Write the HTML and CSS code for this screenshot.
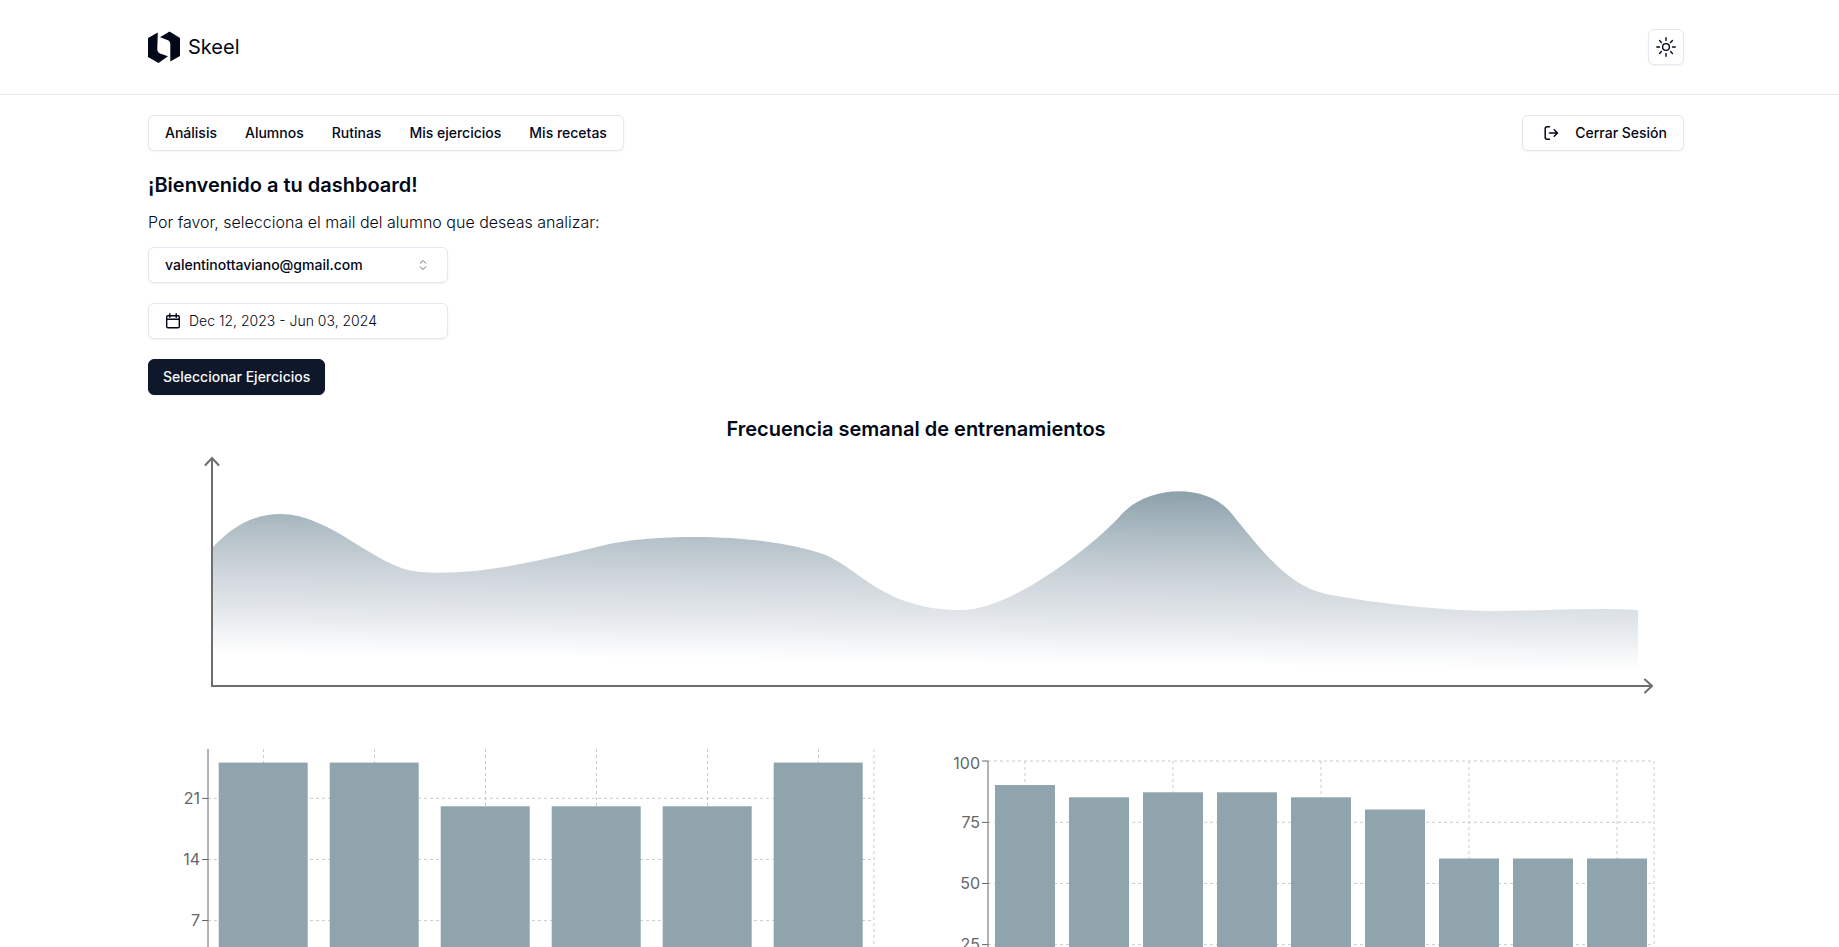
FILE: index.html
```html
<!DOCTYPE html>
<html lang="es">
<head>
<meta charset="utf-8">
<meta name="viewport" content="width=device-width, initial-scale=1">
<title>Skeel</title>
<link rel="stylesheet" href="styles.css">
</head>
<body>
<header class="site-header">
  <div class="container header-row">
    <a class="brand" href="#">
      <svg class="brand-logo" viewBox="0 0 32 32" aria-hidden="true">
        <path d="M0 7 9.8 1.500 9.300 17.500C9.300 20 9.700 21.400 12 22.500L20 25.300 10.500 32 0 26Z"/>
        <path d="M12 6.200 21.500 .4 32 7V25L22.300 30.400V14C22.300 11.500 22 9.800 19.400 8.900Z"/>
      </svg>
      <span>Skeel</span>
    </a>
    <button class="btn icon-btn" type="button" aria-label="Cambiar tema">
      <svg class="icon-sun" viewBox="0 0 20 20" aria-hidden="true">
        <circle cx="10" cy="10" r="3.400"/>
        <path d="M10 .8V3.500M10 16.500v2.700M.8 10H3.500M16.500 10h2.700M3.600 3.600 5.400 5.400M14.600 14.600l1.800 1.800M3.600 16.400l1.800-1.800M14.600 5.400l1.800-1.800"/>
      </svg>
    </button>
  </div>
</header>

<main class="page">
  <div class="container">
    <div class="toolbar">
      <nav class="menu">
        <a href="#">Análisis</a>
        <a href="#">Alumnos</a>
        <a href="#">Rutinas</a>
        <a href="#">Mis ejercicios</a>
        <a href="#">Mis recetas</a>
      </nav>
      <button class="btn logout" type="button">
        <svg class="icon-logout" viewBox="0 0 24 16" aria-hidden="true">
          <path d="M10.500 1.800H8.200Q6.200 1.800 6.200 3.800V12.200Q6.200 14.200 8.200 14.200H10.500M10.500 8H18.500M15.200 4.700 18.500 8 15.200 11.300"/>
        </svg>
        Cerrar Sesión
      </button>
    </div>

    <h1 class="title">¡Bienvenido a tu dashboard!</h1>

    <form class="filters">
      <label class="hint" for="student">Por favor, selecciona el mail del alumno que deseas analizar:</label>
      <div class="select-wrap">
        <select class="btn select" id="student">
          <option>valentinottaviano@gmail.com</option>
        </select>
        <svg class="icon-sort" viewBox="0 0 16 16" aria-hidden="true">
          <path d="M5.300 6.200 8 3.500l2.700 2.700M5.300 9.800 8 12.500l2.700-2.700"/>
        </svg>
      </div>
      <button class="btn date" type="button">
        <svg class="icon-calendar" viewBox="0 0 16 16" aria-hidden="true">
          <rect x="1.700" y="2.700" width="12.600" height="12" rx="1.300"/>
          <path d="M4.800 .8v3.500M11.200 .8v3.500M1.700 6.200h12.600"/>
        </svg>
        Dec 12, 2023 - Jun 03, 2024
      </button>
      <button class="btn primary" type="button">Seleccionar Ejercicios</button>
    </form>

    <h2 class="title chart-title">Frecuencia semanal de entrenamientos</h2>
    <svg class="area-chart" viewBox="0 0 1536 260" role="img" aria-label="Frecuencia semanal de entrenamientos">
      <defs>
        <linearGradient id="wave" gradientUnits="userSpaceOnUse" x1="780" y1="43" x2="778" y2="214">
          <stop offset="0" stop-color="#8fa2ac"/>
          <stop offset=".25" stop-color="#afbdc5"/>
          <stop offset=".5" stop-color="#cdd4da"/>
          <stop offset=".75" stop-color="#e4e8ec"/>
          <stop offset="1" stop-color="#ffffff"/>
        </linearGradient>
      </defs>
      <path class="wave" d="M65 99C86 77 108 66 132 66C184 66 228 121 272 124C330 128 390 113 453 98C480 91 515 89 546 89C600 89 645 96 675 106C710 119 735 162 813 162C865 162 948 95 972 68C1000 36 1060 35 1084 66C1115 104 1140 138 1178 146C1230 156 1300 163 1349 163C1390 163 1440 159 1490 162V237H65Z"/>
      <path class="axis" d="M64 10V238H1504M57.500 17 64 10l6.500 7M1497 231.500l7 6.500-7 6.500"/>
    </svg>

    <section class="bar-charts">
      <svg class="bar-chart" viewBox="0 0 768 260" role="img" aria-label="Gráfico de barras">
        <path class="grid" d="M60 49.300H726M60 110.500H726M60 171.600H726M115.500 0V232M226.500 0V232M337.500 0V232M448.500 0V232M559.500 0V232M670.500 0V232M726 0V232"/>
        <path class="ticks" d="M60 0V232M54 49.400H60M54 110.500H60M54 171.500H60"/>
        <g class="labels">
          <text x="52" y="55">21</text>
          <text x="52" y="116">14</text>
          <text x="52" y="177">7</text>
        </g>
        <g class="bars">
          <rect x="70.700" y="13.600" width="89" height="219"/>
          <rect x="181.700" y="13.600" width="89" height="219"/>
          <rect x="292.700" y="57.300" width="89" height="175"/>
          <rect x="403.700" y="57.300" width="89" height="175"/>
          <rect x="514.700" y="57.300" width="89" height="175"/>
          <rect x="625.700" y="13.600" width="89" height="219"/>
        </g>
      </svg>
      <svg class="bar-chart" viewBox="0 0 768 260" role="img" aria-label="Gráfico de barras">
        <path class="grid" d="M72 12H738M72 73.300H738M72 134.500H738M72 195.600H738M109 12V256M257 12V256M405 12V256M553 12V256M701 12V256M738 12V256"/>
        <path class="ticks" d="M72 12V256M66 12H72M66 73.400H72M66 134.500H72M66 195.600H72"/>
        <g class="labels">
          <text x="64" y="20">100</text>
          <text x="64" y="79">75</text>
          <text x="64" y="140">50</text>
          <text x="64" y="201">25</text>
        </g>
        <g class="bars">
          <rect x="79" y="36" width="60" height="220"/>
          <rect x="153" y="48.300" width="60" height="208"/>
          <rect x="227" y="43.300" width="60" height="213"/>
          <rect x="301" y="43.300" width="60" height="213"/>
          <rect x="375" y="48.300" width="60" height="208"/>
          <rect x="449" y="60.500" width="60" height="196"/>
          <rect x="523" y="109.500" width="60" height="147"/>
          <rect x="597" y="109.500" width="60" height="147"/>
          <rect x="671" y="109.500" width="60" height="147"/>
        </g>
      </svg>
    </section>
  </div>
</main>
</body>
</html>
```
FILE: styles.css
```css
* {
  box-sizing: border-box;
}

body {
  margin: 0;
  background: #fff;
  color: #020817;
  font-family: Inter, "Liberation Sans", sans-serif;
  font-size: 16px;
  line-height: 24px;
}

a {
  color: inherit;
  text-decoration: none;
}

svg {
  display: block;
  flex: none;
}

.site-header {
  padding: 29px 7px 29px 0;
  border-bottom: 1px solid #e2e8f0;
}

.page {
  padding: 20px 7px 0 0;
}

.container {
  width: 100%;
  max-width: 1536px;
  margin: 0 auto;
}

.header-row,
.toolbar {
  display: flex;
  align-items: center;
  justify-content: space-between;
}

.brand {
  display: flex;
  align-items: center;
  gap: 8px;
  font-size: 20px;
}

.brand-logo {
  width: 32px;
  height: 32px;
  fill: #020817;
}

.btn,
.menu {
  height: 36px;
  border: 1px solid #e2e8f0;
  border-radius: 6px;
  background: #fff;
  box-shadow: 0 1px 2px rgba(0, 0, 0, 0.05);
  color: #020817;
  font-family: inherit;
  font-size: 14px;
  font-weight: 500;
  line-height: 20px;
}

.btn {
  display: flex;
  align-items: center;
  padding: 0 16px;
  cursor: pointer;
}

.btn svg,
.select-wrap svg {
  fill: none;
  stroke: #020817;
  stroke-linecap: round;
  stroke-linejoin: round;
}

.icon-btn {
  width: 36px;
  padding: 0;
  justify-content: center;
}

.icon-sun {
  width: 20px;
  height: 20px;
  stroke-width: 1.4;
}

.menu {
  display: flex;
  align-items: center;
  gap: 28px;
  padding: 0 16px;
}

.menu,
.logout,
.select {
  font-weight: 450;
}

.logout {
  gap: 12px;
}

.icon-logout {
  width: 24px;
  height: 16px;
  stroke-width: 1.5;
}

.title {
  margin: 20px 0 0;
  font-size: 20px;
  font-weight: 600;
  line-height: 28px;
}

.filters {
  display: flex;
  flex-direction: column;
  align-items: flex-start;
  gap: 20px;
  margin-top: 11px;
}

.hint {
  margin-bottom: -7px;
  font-weight: 300;
}

.select-wrap {
  position: relative;
  width: 300px;
}

.select {
  width: 100%;
  appearance: none;
}

.icon-sort {
  position: absolute;
  top: 10px;
  right: 17px;
  width: 16px;
  height: 16px;
  opacity: 0.6;
  pointer-events: none;
}

.date {
  width: 300px;
  gap: 8px;
  font-weight: 300;
}

.icon-calendar {
  width: 16px;
  height: 16px;
  stroke-width: 1.4;
}

.primary {
  padding: 0 14px;
  border-color: #0f172a;
  background: #0f172a;
  color: #f8fafc;
}

.chart-title {
  text-align: center;
}

.area-chart {
  width: 100%;
  margin-top: 5px;
}

.wave {
  fill: url(#wave);
}

.axis {
  fill: none;
  stroke: #6e6e6e;
  stroke-width: 2;
  stroke-linecap: round;
}

.bar-charts {
  display: grid;
  grid-template-columns: 1fr 1fr;
  margin-top: 41px;
}

.bar-chart {
  width: 100%;
}

.grid {
  fill: none;
  stroke: #ccc;
  stroke-dasharray: 3 3;
}

.ticks {
  fill: none;
  stroke: #666;
}

.labels {
  fill: #666;
  font-size: 16px;
  font-weight: 400;
  text-anchor: end;
}

.bars {
  fill: #90a4ad;
}
```
